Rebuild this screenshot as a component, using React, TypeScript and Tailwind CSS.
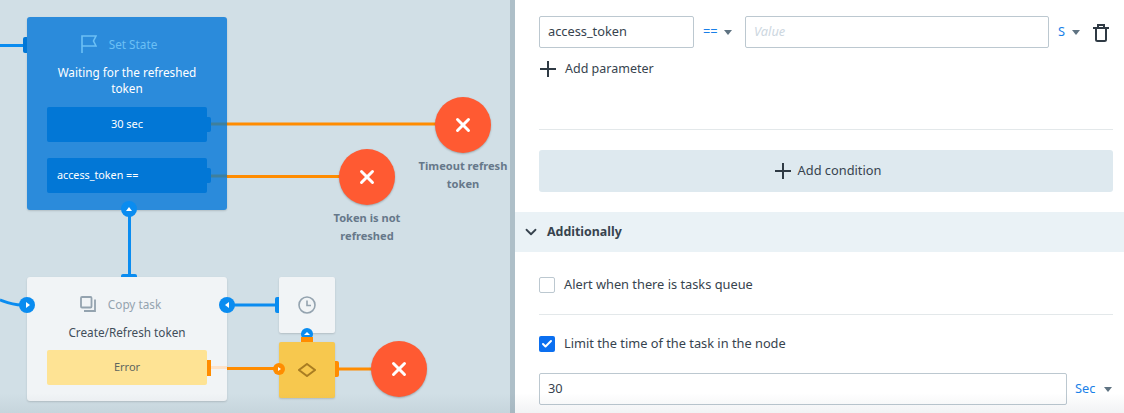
import { Check, ChevronDown, X } from 'lucide-react';

const font = { fontFamily: '"Noto Sans", sans-serif' };

function Caret() {
  return <span className="h-0 w-0 shrink-0 border-x-[4px] border-t-[5px] border-x-transparent border-t-[#5f7382]" />;
}

function Port({ className }: { className: string }) {
  return <span className={`absolute ${className}`} />;
}

function PlusIcon() {
  return (
    <svg className="shrink-0" width="16" height="16" viewBox="0 0 16 16" fill="none" stroke="#2f3a44" strokeWidth="2">
      <path d="M8 0V16M0 8H16" />
    </svg>
  );
}

function EndNode({ x, y, label }: { x: string; y: string; label?: string[] }) {
  return (
    <div className={`absolute ${x} ${y} flex w-[100px] flex-col items-center`}>
      <div className="flex h-14 w-14 items-center justify-center rounded-full bg-[#ff5a32] shadow-[0_1px_2px_rgba(0,0,0,0.25)]">
        <X className="h-[22px] w-[22px] text-white" strokeWidth={3.2} />
      </div>
      {label && (
        <div className="mt-1 text-center text-[11.1px] font-bold leading-[18px] text-[#66788a] whitespace-nowrap">
          {label.map(line => <div key={line}>{line}</div>)}
        </div>
      )}
    </div>
  );
}

function Canvas() {
  return (
    <div className="relative h-full w-[510px] shrink-0 overflow-hidden bg-[#d1dfe6]">
      {/* connections */}
      <svg className="absolute left-0 top-0" width="510" height="413" fill="none">
        <path d="M0 45.5H24" stroke="#0a8cf0" strokeWidth="3" />
        <path d="M129.5 215V275" stroke="#0a8cf0" strokeWidth="3" />
        <path d="M0 300C8 303 12 305 22 305" stroke="#0a8cf0" strokeWidth="3" />
        <path d="M232 305H276" stroke="#0a8cf0" strokeWidth="3" />
        <path d="M227 124H436" stroke="#ff8c00" strokeWidth="3" />
        <path d="M227 176.5H340" stroke="#ff8c00" strokeWidth="3" />
        <path d="M227 368.5H280" stroke="#ff8c00" strokeWidth="3" />
        <path d="M338 369H372" stroke="#ff8c00" strokeWidth="3" />
      </svg>

      {/* Set State */}
      <div className="absolute left-[27px] top-[17px] flex h-[193px] w-[200px] flex-col items-center rounded-[3px] bg-[#2b8bdb] px-5 shadow-[0_1px_2px_rgba(0,0,0,0.15)]">
        <div className="mt-[19px] flex h-4 items-center gap-[12px] pr-4 text-[#6cc0f5]">
          <svg width="16" height="18" viewBox="0 0 16 18" fill="none" stroke="currentColor" strokeWidth="1.6">
            <path d="M1 18V1H15L12.5 6L15 11H1" />
          </svg>
          <span className="text-[11.75px] leading-4">Set State</span>
        </div>
        <div className="mt-3 text-center text-[11.75px] leading-4 text-white">Waiting for the refreshed token</div>
        <div className="relative mt-[11px] flex h-[35px] w-full items-center justify-center rounded-[2px] bg-[#0277d6] text-[11px] text-white">
          30 sec
          <Port className="-right-1 top-[10px] h-[15px] w-1 rounded-r-[2px] bg-[#0277d6]" />
        </div>
        <div className="relative mt-4 flex h-[35px] w-full items-center rounded-[2px] bg-[#0277d6] pl-[10px] text-[10.75px] text-white">
          access_token ==
          <Port className="-right-1 top-[10px] h-[15px] w-1 rounded-r-[2px] bg-[#0277d6]" />
        </div>
        <svg className="absolute left-[184px] top-[105px]" width="16" height="60" fill="none">
          <path d="M0 2H16" stroke="#3f7f9c" strokeWidth="3" />
          <path d="M0 54H16" stroke="#3f7f9c" strokeWidth="3" />
        </svg>
        <Port className="-left-1 top-5 h-4 w-1 rounded-l-[2px] bg-[#0277d6]" />
        <span className="absolute left-[94px] top-[184px] flex h-4 w-4 items-center justify-center rounded-full bg-[#0a8cf0]">
          <span className="h-0 w-0 border-x-[3.5px] border-b-[4px] border-x-transparent border-b-white" />
        </span>
      </div>

      {/* Copy task */}
      <div className="absolute left-[27px] top-[277px] flex h-[124px] w-[200px] flex-col items-center rounded-[3px] bg-[#f1f4f6] px-5 shadow-[0_1px_2px_rgba(0,0,0,0.15)]">
        <div className="mt-[19px] flex h-4 items-center gap-[12px] pr-[13px] text-[#94a3af]">
          <svg width="16" height="16" viewBox="0 0 16 16" fill="none" stroke="currentColor" strokeWidth="1.8">
            <rect x="1" y="1" width="10.5" height="10.5" rx="1" />
            <path d="M15 3.5V15H4" />
          </svg>
          <span className="text-[11.75px] leading-4">Copy task</span>
        </div>
        <div className="mt-3 text-[11.75px] leading-4 text-[#414e5a]">Create/Refresh token</div>
        <div className="relative mt-[10px] flex h-[35px] w-full items-center justify-center rounded-[2px] bg-[#fee394] text-[11px] text-[#5e6660]">
          Error
          <Port className="-right-1 top-[10px] h-[16px] w-1 bg-[#ff8c00]" />
          <span className="absolute -right-5 top-[16px] h-[3px] w-4 bg-[#fde2c8]" />
        </div>
        <Port className="left-[94px] -top-[3px] h-[3px] w-4 rounded-t-[2px] bg-[#0a8cf0]" />
        <span className="absolute -left-2 top-5 flex h-4 w-4 items-center justify-center rounded-full bg-[#0a8cf0]">
          <span className="ml-px h-0 w-0 border-y-[3.5px] border-l-[4px] border-y-transparent border-l-white" />
        </span>
        <span className="absolute -right-2 top-5 flex h-4 w-4 items-center justify-center rounded-full bg-[#0a8cf0]">
          <span className="mr-px h-0 w-0 border-y-[3.5px] border-r-[4px] border-y-transparent border-r-white" />
        </span>
      </div>

      {/* Timer */}
      <div className="absolute left-[279px] top-[277px] flex h-14 w-14 items-center justify-center rounded-[2px] bg-[#f1f4f6] shadow-[0_1px_2px_rgba(0,0,0,0.15)]">
        <svg width="18" height="18" viewBox="0 0 18 18" fill="none" stroke="#94a3af" strokeWidth="1.6">
          <circle cx="9" cy="9" r="8" />
          <path d="M9 4.5V9.5H13" />
        </svg>
        <Port className="-left-1 top-5 h-4 w-1 rounded-l-[2px] bg-[#0a8cf0]" />
      </div>

      {/* Condition */}
      <div className="absolute left-[279px] top-[342px] flex h-14 w-14 items-center justify-center rounded-[2px] bg-[#f7c84e] shadow-[0_1px_2px_rgba(0,0,0,0.15)]">
        <svg className="-mt-px" width="18" height="14" viewBox="0 0 18 14" fill="none" stroke="#a97d22" strokeWidth="2">
          <path d="M9 1L17 7L9 13L1 7Z" />
        </svg>
        <Port className="left-[22px] -top-[5px] h-[5px] w-3 bg-[#ff8c00]" />
        <span className="absolute left-[22px] -top-[14px] flex h-3 w-3 items-center justify-center rounded-full bg-[#0a8cf0] [clip-path:inset(0_0_3px_0)]">
          <span className="mb-[2px] h-0 w-0 border-x-[3px] border-b-[3px] border-x-transparent border-b-white" />
        </span>
        <span className="absolute -left-[6px] top-[21px] flex h-3 w-3 items-center justify-center rounded-full bg-[#ff8c00]">
          <span className="h-0 w-0 border-y-[2px] border-l-[3px] border-y-transparent border-l-white" />
        </span>
        <Port className="-right-1 top-[19px] h-4 w-1 rounded-r-[2px] bg-[#ff8c00]" />
      </div>

      <EndNode x="left-[413px]" y="top-[97px]" label={['Timeout refresh', 'token']} />
      <EndNode x="left-[317px]" y="top-[149px]" label={['Token is not', 'refreshed']} />
      <EndNode x="left-[349px]" y="top-[341px]" />
    </div>
  );
}

function Panel() {
  return (
    <div className="h-full flex-1 overflow-hidden border-l-[5px] border-[#aebfc8] bg-white text-[12.8px] text-[#37434e]">
      <div className="pl-6 pr-[11px] pt-4">
        <div className="flex h-8 items-center">
          <div className="flex h-8 w-[155px] shrink-0 items-center rounded-[2px] border border-[#bcc8d0] pl-2">access_token</div>
          <span className="ml-[9px] w-[21px] text-[#1a7fe8]">==</span>
          <Caret />
          <div className="ml-[13px] flex h-8 w-[304px] shrink-0 items-center rounded-[2px] border border-[#bcc8d0] pl-2 italic text-[#cdd7df]">Value</div>
          <span className="ml-[9px] w-[14px] text-[#1a7fe8]">S</span>
          <Caret />
          <svg className="ml-[13px] mt-[1px]" width="16" height="18" viewBox="0 0 16 18" fill="none" stroke="#2f3a44" strokeWidth="2">
            <path d="M0 4H16M5 4V1H11V4M3 4V15.5C3 16.3 3.7 17 4.5 17H11.5C12.3 17 13 16.3 13 15.5V4" />
          </svg>
        </div>
        <div className="mt-[13px] flex h-4 items-center pl-px">
          <PlusIcon />
          <span className="ml-[9px] text-[12.5px]">Add parameter</span>
        </div>
        <div className="mt-[52px] h-px bg-[#e3e8ea]" />
        <div className="mt-5 flex h-[42px] items-center justify-center rounded-[3px] bg-[#dee9ef] pl-1">
          <PlusIcon />
          <span className="ml-[7px]">Add condition</span>
        </div>
      </div>
      <div className="mt-5 flex h-10 items-center bg-[#eaf2f6] pl-[7px] font-bold">
        <ChevronDown className="h-[18px] w-[18px]" strokeWidth={2.4} />
        <span className="ml-[7px] text-[12.4px]">Additionally</span>
      </div>
      <div className="pl-6 pr-[11px]">
        <div className="mt-[25px] flex h-4 items-center">
          <span className="h-4 w-4 rounded-[2px] border border-[#bcc8d0]" />
          <span className="ml-[9px]">Alert when there is tasks queue</span>
        </div>
        <div className="mt-[21px] h-px bg-[#e3e8ea]" />
        <div className="mt-[21px] flex h-4 items-center">
          <span className="flex h-4 w-4 items-center justify-center rounded-[2px] bg-[#0b6ff0]">
            <Check className="h-3 w-3 text-white" strokeWidth={4} />
          </span>
          <span className="ml-[9px]">Limit the time of the task in the node</span>
        </div>
        <div className="mt-[21px] flex h-8 items-center">
          <div className="flex h-8 w-[528px] shrink-0 items-center rounded-[2px] border border-[#bcc8d0] pl-2">30</div>
          <span className="ml-2 w-[29px] text-[#1a7fe8]">Sec</span>
          <Caret />
        </div>
      </div>
    </div>
  );
}

export default function App() {
  return (
    <div className="relative flex h-[413px] w-[1124px] overflow-hidden" style={font}>
      <Canvas />
      <Panel />
      {/* bottom fade */}
      <div className="pointer-events-none absolute bottom-0 left-0 h-5 w-full bg-gradient-to-b from-transparent to-[rgba(60,80,95,0.07)]" />
    </div>
  );
}
